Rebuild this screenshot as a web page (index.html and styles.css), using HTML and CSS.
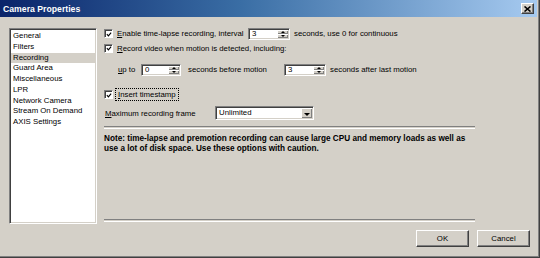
FILE: index.html
```html
<!DOCTYPE html>
<html lang="en">
<head>
  <meta charset="UTF-8">
  <title>Camera Properties</title>
  <link rel="stylesheet" href="styles.css">
</head>
<body>
  <div class="window">
    <div class="titlebar">
      <span class="title">Camera Properties</span>
      <span class="close"><svg width="7" height="6" viewBox="0 0 7 6"><path d="M0.5 0.5 L6.5 5.5 M6.5 0.5 L0.5 5.5" stroke="#000" stroke-width="1.6"/></svg></span>
    </div>
    <div class="main">
      <ul class="list">
        <li>General</li>
        <li>Filters</li>
        <li class="selected">Recording</li>
        <li>Guard Area</li>
        <li>Miscellaneous</li>
        <li>LPR</li>
        <li>Network Camera</li>
        <li>Stream On Demand</li>
        <li>AXIS Settings</li>
      </ul>
      <div class="panel">
        <div class="row row-interval">
          <span class="check"><svg width="7" height="7" viewBox="0 0 7 7"><path d="M1 3 L2.8 5 L6 1.2" stroke="#000" stroke-width="1.3" fill="none"/></svg></span>
          <span class="label label-interval"><u>E</u>nable time-lapse recording, interval</span>
          <span class="spin spin-wide"><span class="spin-value">3</span><span class="spin-btns"><span class="arrow up"></span><span class="arrow down"></span></span></span>
          <span class="label after">seconds, use 0 for continuous</span>
        </div>
        <div class="row row-motion">
          <span class="check"><svg width="7" height="7" viewBox="0 0 7 7"><path d="M1 3 L2.8 5 L6 1.2" stroke="#000" stroke-width="1.3" fill="none"/></svg></span>
          <span class="label"><u>R</u>ecord video when motion is detected, including:</span>
        </div>
        <div class="row row-upto">
          <span class="label label-upto"><u>u</u>p to</span>
          <span class="spin"><span class="spin-value">0</span><span class="spin-btns"><span class="arrow up"></span><span class="arrow down"></span></span></span>
          <span class="label label-before">seconds before motion</span>
          <span class="spin spin-wide"><span class="spin-value">3</span><span class="spin-btns"><span class="arrow up"></span><span class="arrow down"></span></span></span>
          <span class="label after">seconds after last motion</span>
        </div>
        <div class="row row-stamp">
          <span class="check"><svg width="7" height="7" viewBox="0 0 7 7"><path d="M1 3 L2.8 5 L6 1.2" stroke="#000" stroke-width="1.3" fill="none"/></svg></span>
          <span class="label focus"><u>I</u>nsert timestamp</span>
        </div>
        <div class="row row-frame">
          <span class="label label-frame"><u>M</u>aximum recording frame</span>
          <span class="combo"><span class="combo-value">Unlimited</span><span class="combo-btn"><span class="arrow down"></span></span></span>
        </div>
        <div class="separator"></div>
        <p class="note">Note: time-lapse and premotion recording can cause large CPU and memory loads as well as use a lot of disk space. Use these options with caution.</p>
        <div class="separator bottom"></div>
      </div>
    </div>
    <div class="buttons">
      <button class="btn">OK</button>
      <button class="btn">Cancel</button>
    </div>
  </div>
</body>
</html>
```

FILE: styles.css
```css
body {
  margin: 0;
  background: #d4d0c8;
  font-family: 'Liberation Sans', Arial, sans-serif;
  font-size: 7.8px;
  color: #000;
}
.window {
  width: 540px;
  height: 258px;
  box-sizing: border-box;
  background: #d4d0c8;
  border-right: 1px solid #404040;
  border-bottom: 1px solid #404040;
  box-shadow: inset -1px -1px #808080;
  display: flex;
  flex-direction: column;
}
.titlebar {
  height: 17px;
  margin-right: 2px;
  background: linear-gradient(90deg, #0a246a 0%, #3a6ea5 45%, #a6caf0 100%);
  display: flex;
  align-items: center;
  justify-content: space-between;
  padding: 0 3px 0 3px;
}
.title {
  color: #fff;
  font-weight: 700;
  font-size: 8.7px;
}
.close {
  width: 13px;
  height: 11px;
  box-sizing: border-box;
  background: #d4d0c8;
  border-top: 1px solid #fff;
  border-left: 1px solid #fff;
  border-right: 1px solid #404040;
  border-bottom: 1px solid #404040;
  box-shadow: inset -1px -1px #808080;
  display: flex;
  align-items: center;
  justify-content: center;
}
.main {
  display: flex;
  padding: 11px 0 0 9px;
  gap: 7px;
}
.list {
  list-style: none;
  margin: 0;
  padding: 2px 1px;
  width: 88px;
  height: 196px;
  box-sizing: border-box;
  background: #fff;
  border-top: 1px solid #808080;
  border-left: 1px solid #808080;
  border-right: 1px solid #fff;
  border-bottom: 1px solid #fff;
  box-shadow: inset 1px 1px #404040, inset -1px -1px #d4d0c8;
}
.list li {
  height: 10.75px;
  line-height: 10.75px;
  padding-left: 2px;
  white-space: nowrap;
}
.list li.selected {
  background: #d4d0c8;
}
.panel {
  width: 372px;
  display: flex;
  flex-direction: column;
}
.row {
  display: flex;
  align-items: center;
  white-space: nowrap;
}
.row-interval { height: 13px; margin-top: -1px; }
.row-motion { height: 10px; margin-top: 3px; }
.row-upto { height: 13px; margin-top: 10px; }
.row-stamp { height: 11px; margin-top: 13px; }
.row-frame { height: 14px; margin-top: 6px; }
.check {
  width: 9px;
  height: 9px;
  box-sizing: border-box;
  background: #fff;
  border-top: 1px solid #808080;
  border-left: 1px solid #808080;
  border-right: 1px solid #fff;
  border-bottom: 1px solid #fff;
  box-shadow: inset 1px 1px #404040;
  display: flex;
  align-items: center;
  justify-content: center;
  margin-right: 4px;
  flex: none;
}
.check svg { margin: 1px 0 0 1px; }
.label-interval { width: 131px; }
.label-upto { width: 23px; margin-left: 14px; }
.label-before { width: 96px; margin-left: 7px; }
.label-frame { width: 110px; margin-left: 1px; }
.after { margin-left: 4px; }
.focus {
  outline: 1px dotted #000;
  outline-offset: 1px;
  padding: 0 1px;
}
.spin, .combo {
  height: 12px;
  box-sizing: border-box;
  background: #fff;
  border-top: 1px solid #808080;
  border-left: 1px solid #808080;
  border-right: 1px solid #fff;
  border-bottom: 1px solid #fff;
  box-shadow: inset 1px 1px #404040, inset -1px -1px #d4d0c8;
  display: flex;
  align-items: stretch;
  flex: none;
}
.spin { width: 40px; }
.spin-wide { width: 42px; }
.spin-value, .combo-value {
  flex: 1;
  padding-left: 3px;
  line-height: 10px;
}
.spin-btns {
  width: 11px;
  display: flex;
  flex-direction: column;
  padding: 1px 1px 1px 0;
}
.spin-btns .arrow {
  flex: 1;
  background: #d4d0c8;
  border-top: 1px solid #fff;
  border-left: 1px solid #fff;
  box-shadow: inset -1px -1px #808080;
  position: relative;
}
.arrow::after {
  content: "";
  position: absolute;
  left: 50%;
  top: 50%;
  margin: -1px 0 0 -2px;
  border-left: 2px solid transparent;
  border-right: 2px solid transparent;
}
.arrow.up::after { border-bottom: 2px solid #000; }
.arrow.down::after { border-top: 2px solid #000; }
.combo {
  width: 99px;
  height: 14px;
}
.combo-value { line-height: 12px; }
.combo-btn {
  width: 11px;
  margin: 1px 1px 1px 0;
  display: flex;
}
.combo-btn .arrow {
  flex: 1;
  background: #d4d0c8;
  border-top: 1px solid #fff;
  border-left: 1px solid #fff;
  box-shadow: inset -1px -1px #808080;
  position: relative;
}
.combo-btn .arrow::after {
  margin: -1px 0 0 -3px;
  border-left-width: 3px;
  border-right-width: 3px;
  border-top-width: 3px;
}
.separator {
  height: 1px;
  width: 371px;
  border-top: 1px solid #808080;
  border-bottom: 1px solid #fff;
  margin-top: 6px;
}
.note {
  width: 366px;
  margin: 5px 0 0 0;
  font-weight: 700;
  font-size: 8.2px;
  line-height: 10px;
}
.separator.bottom { margin-top: 65px; }
.buttons {
  display: flex;
  justify-content: flex-end;
  gap: 8px;
  padding: 6px 9px 0 0;
}
.btn {
  width: 53px;
  height: 17px;
  box-sizing: border-box;
  background: #d4d0c8;
  font-family: 'Liberation Sans', Arial, sans-serif;
  font-size: 7.8px;
  color: #000;
  border-top: 1px solid #fff;
  border-left: 1px solid #fff;
  border-right: 1px solid #404040;
  border-bottom: 1px solid #404040;
  box-shadow: inset -1px -1px #808080;
  padding: 0;
}
```
